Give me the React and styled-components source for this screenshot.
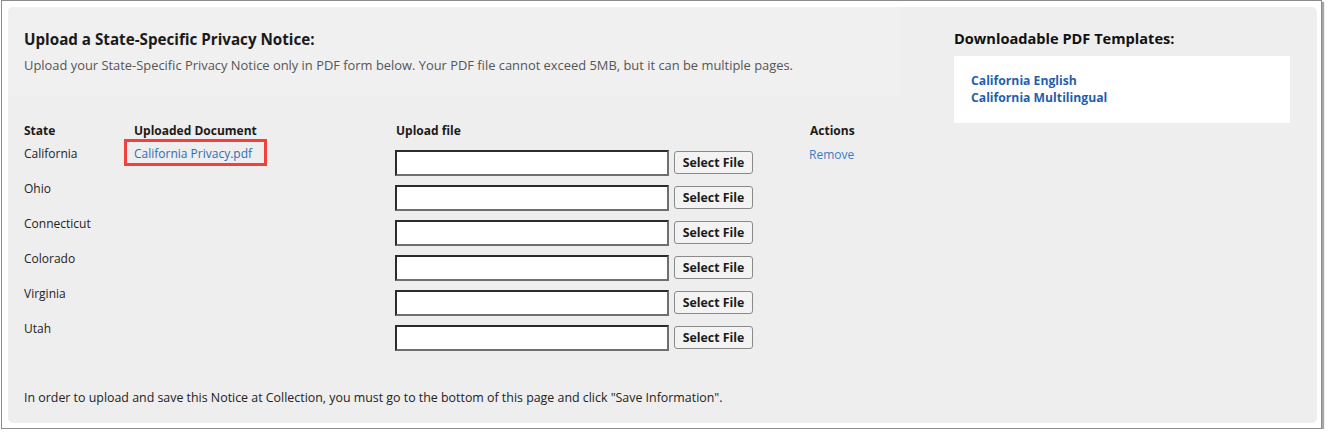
import React from 'react';
import styled, { createGlobalStyle } from 'styled-components';

const GlobalStyle = createGlobalStyle`
  body {
    margin: 0;
    background: #ffffff;
    font-family: "Open Sans", "Liberation Sans", sans-serif;
    color: #222;
  }
`;

const Frame = styled.div`
  box-sizing: border-box;
  width: 1321px;
  height: 429px;
  margin-left: 1px;
  padding: 6px 4px 5px 6px;
  background: #fff;
  border: 1px solid #8c8c8c;
  box-shadow: 2px 2px 1px rgba(0, 0, 0, 0.35);
`;

const Panel = styled.div`
  height: 100%;
  box-sizing: border-box;
  background: #eeeeee;
  border-radius: 5px;
  display: flex;
`;

const MainColumn = styled.div`
  width: 892px;
  display: flex;
  flex-direction: column;
`;

const Intro = styled.div`
  background: #f0f0f0;
  border-radius: 5px 0 0 0;
  padding: 22px 16px 0;
  height: 90px;
  box-sizing: border-box;
`;

const Heading = styled.h2`
  margin: 0 0 7px;
  font-size: 15.2px;
  line-height: 20px;
  font-weight: 700;
  color: #1a1a1a;
`;

const Description = styled.p`
  margin: 0;
  font-size: 12.9px;
  line-height: 18px;
  color: #555;
`;

const Table = styled.div`
  display: grid;
  grid-template-columns: 110px 262px 414px 1fr;
  padding: 25px 0 0 16px;
`;

const HeadCell = styled.div`
  font-size: 12px;
  font-weight: 700;
  line-height: 18px;
  height: 23px;
  color: #1a1a1a;
`;

const Cell = styled.div`
  height: 35px;
  font-size: 12px;
  line-height: 18px;
  color: #222;
  display: flex;
  align-items: flex-start;
  padding-top: ${(p) => (p.$field ? '5px' : '0')};
  box-sizing: border-box;
`;

const DocLink = styled.a`
  position: relative;
  color: #2f6db5;
  text-decoration: none;
  font-size: 12px;

  &::after {
    content: '';
    position: absolute;
    top: -6px;
    left: -10px;
    right: -15px;
    bottom: -3px;
    border: 3px solid #f04141;
  }
`;

const FileBox = styled.input`
  box-sizing: border-box;
  width: 274px;
  height: 26px;
  border: 2px solid;
  border-color: #2b2b2b #6f6f6f #6f6f6f #2b2b2b;
  background: #fff;
  margin: 0 0 0 -1px;
`;

const SelectButton = styled.button`
  margin: 1px 0 0 5px;
  height: 23px;
  width: 79px;
  padding: 0;
  font-family: inherit;
  font-size: 12.3px;
  font-weight: 700;
  color: #1a1a1a;
  background: #f3f3f3;
  border: 1px solid #8a8a8a;
  border-radius: 3px;
`;

const RemoveLink = styled.a`
  color: #3d7cc4;
  font-size: 12px;
  text-decoration: none;
  margin-left: -1px;
  margin-top: 1px;
`;

const Note = styled.p`
  margin: auto 0 0;
  padding: 0 0 16px 16px;
  font-size: 12.4px;
  line-height: 18px;
  color: #222;
`;

const Sidebar = styled.div`
  margin-left: 54px;
  width: 336px;
  padding-top: 21px;
`;

const SideHeading = styled.h3`
  margin: 0 0 8px;
  font-size: 14.6px;
  line-height: 20px;
  font-weight: 700;
  color: #111;
`;

const TemplateBox = styled.div`
  background: #fff;
  padding: 16px 17px 17px;
  display: flex;
  flex-direction: column;
`;

const TemplateLink = styled.a`
  color: #1f5fad;
  font-size: 12.2px;
  font-weight: 700;
  line-height: 17px;
  text-decoration: none;
`;

const states = ['California', 'Ohio', 'Connecticut', 'Colorado', 'Virginia', 'Utah'];

export default function App() {
  return (
    <>
      <GlobalStyle />
      <Frame>
        <Panel>
          <MainColumn>
            <Intro>
              <Heading>Upload a State-Specific Privacy Notice:</Heading>
              <Description>
                Upload your State-Specific Privacy Notice only in PDF form below. Your PDF file cannot exceed 5MB, but it can be multiple pages.
              </Description>
            </Intro>
            <Table>
              <HeadCell>State</HeadCell>
              <HeadCell>Uploaded Document</HeadCell>
              <HeadCell>Upload file</HeadCell>
              <HeadCell>Actions</HeadCell>
              {states.map((s, i) => (
                <React.Fragment key={s}>
                  <Cell>{s}</Cell>
                  <Cell>{i === 0 && <DocLink href="#">California Privacy.pdf</DocLink>}</Cell>
                  <Cell $field>
                    <FileBox type="text" readOnly />
                    <SelectButton>Select File</SelectButton>
                  </Cell>
                  <Cell>{i === 0 && <RemoveLink href="#">Remove</RemoveLink>}</Cell>
                </React.Fragment>
              ))}
            </Table>
            <Note>
              In order to upload and save this Notice at Collection, you must go to the bottom of this page and click "Save Information".
            </Note>
          </MainColumn>
          <Sidebar>
            <SideHeading>Downloadable PDF Templates:</SideHeading>
            <TemplateBox>
              <TemplateLink href="#">California English</TemplateLink>
              <TemplateLink href="#">California Multilingual</TemplateLink>
            </TemplateBox>
          </Sidebar>
        </Panel>
      </Frame>
    </>
  );
}
